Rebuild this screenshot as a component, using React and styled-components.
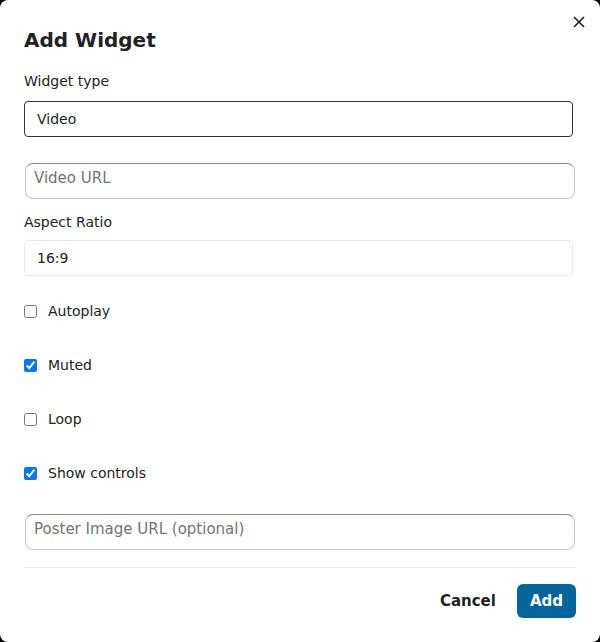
import React from 'react'
import styled, { createGlobalStyle } from 'styled-components'

const GlobalStyle = createGlobalStyle`
  html, body {
    margin: 0;
    padding: 0;
    background: #000;
  }
  body {
    font-family: "DejaVu Sans", "Liberation Sans", sans-serif;
    color: #222;
  }
`

const Dialog = styled.div`
  position: relative;
  box-sizing: border-box;
  width: 600px;
  height: 642px;
  background: #fff;
  border-radius: 8px;
  padding: 28px 24px 24px;
  display: flex;
  flex-direction: column;
`

const CloseButton = styled.button`
  position: absolute;
  top: 13px;
  right: 12px;
  width: 18px;
  height: 18px;
  padding: 0;
  border: 0;
  background: none;
  display: flex;
  align-items: center;
  justify-content: center;
  color: #222;
`

const Title = styled.h2`
  margin: 0 0 19px;
  font-size: 20px;
  line-height: 24px;
  font-weight: bold;
  color: #222;
`

const Label = styled.label`
  display: block;
  font-size: 14px;
  line-height: 20px;
  color: #222;
  margin-bottom: ${p => p.$gap || 10}px;
`

const SelectBox = styled.div`
  box-sizing: border-box;
  width: 549px;
  height: 36px;
  border: 1px solid ${p => (p.$focused ? '#333' : '#eaeaea')};
  border-radius: 4px;
  display: flex;
  align-items: center;
  padding: 0 12px;
  font-size: 14px;
  color: #222;
  margin-bottom: ${p => p.$after || 0}px;
`

const TextInput = styled.input`
  box-sizing: border-box;
  width: 550px;
  height: 36px;
  margin: 0 0 ${p => p.$after || 0}px 1px;
  padding: 0 8px 6px;
  border: 1px solid #c8c8c8;
  border-top-color: #8a8a8a;
  border-radius: 8px;
  font-family: "DejaVu Sans", sans-serif;
  font-size: 15px;
  color: #222;
  background: #fff;
  outline: none;

  &::placeholder {
    color: #757575;
  }
`

const CheckRow = styled.label`
  display: flex;
  align-items: center;
  height: 20px;
  font-size: 14px;
  color: #222;
  margin-bottom: ${p => p.$after}px;

  input {
    margin: 0 11px 0 0;
    width: 13px;
    height: 13px;
  }
`

const Divider = styled.hr`
  width: 100%;
  margin: 0 0 16px;
  border: 0;
  border-top: 1px solid #ececec;
`

const Footer = styled.div`
  display: flex;
  justify-content: flex-end;
  align-items: center;
  gap: 21px;
`

const Button = styled.button`
  height: 34px;
  padding: 0 ${p => (p.$primary ? 13 : 0)}px;
  border: 0;
  border-radius: 6px;
  background: ${p => (p.$primary ? '#04659d' : 'transparent')};
  color: ${p => (p.$primary ? '#fff' : '#222')};
  font-family: "DejaVu Sans", sans-serif;
  font-size: 15px;
  font-weight: bold;
`

const checks = [
  { label: 'Autoplay', checked: false },
  { label: 'Muted', checked: true },
  { label: 'Loop', checked: false },
  { label: 'Show controls', checked: true },
]

function App() {
  return (
    <>
      <GlobalStyle />
      <Dialog>
        <CloseButton aria-label="Close">
          <svg width="12" height="12" viewBox="0 0 12 12">
            <path d="M1 1L11 11M11 1L1 11" stroke="#222" strokeWidth="1.7" />
          </svg>
        </CloseButton>
        <Title>Add Widget</Title>

        <Label>Widget type</Label>
        <SelectBox $focused $after={26}>Video</SelectBox>

        <TextInput placeholder="Video URL" $after={13} />

        <Label $gap={8}>Aspect Ratio</Label>
        <SelectBox $after={25}>16:9</SelectBox>

        {checks.map((c, i) => (
          <CheckRow key={c.label} $after={i === checks.length - 1 ? 31 : 34}>
            <input type="checkbox" defaultChecked={c.checked} />
            {c.label}
          </CheckRow>
        ))}

        <TextInput placeholder="Poster Image URL (optional)" $after={17} />

        <Divider />
        <Footer>
          <Button>Cancel</Button>
          <Button $primary>Add</Button>
        </Footer>
      </Dialog>
    </>
  )
}

export default App
